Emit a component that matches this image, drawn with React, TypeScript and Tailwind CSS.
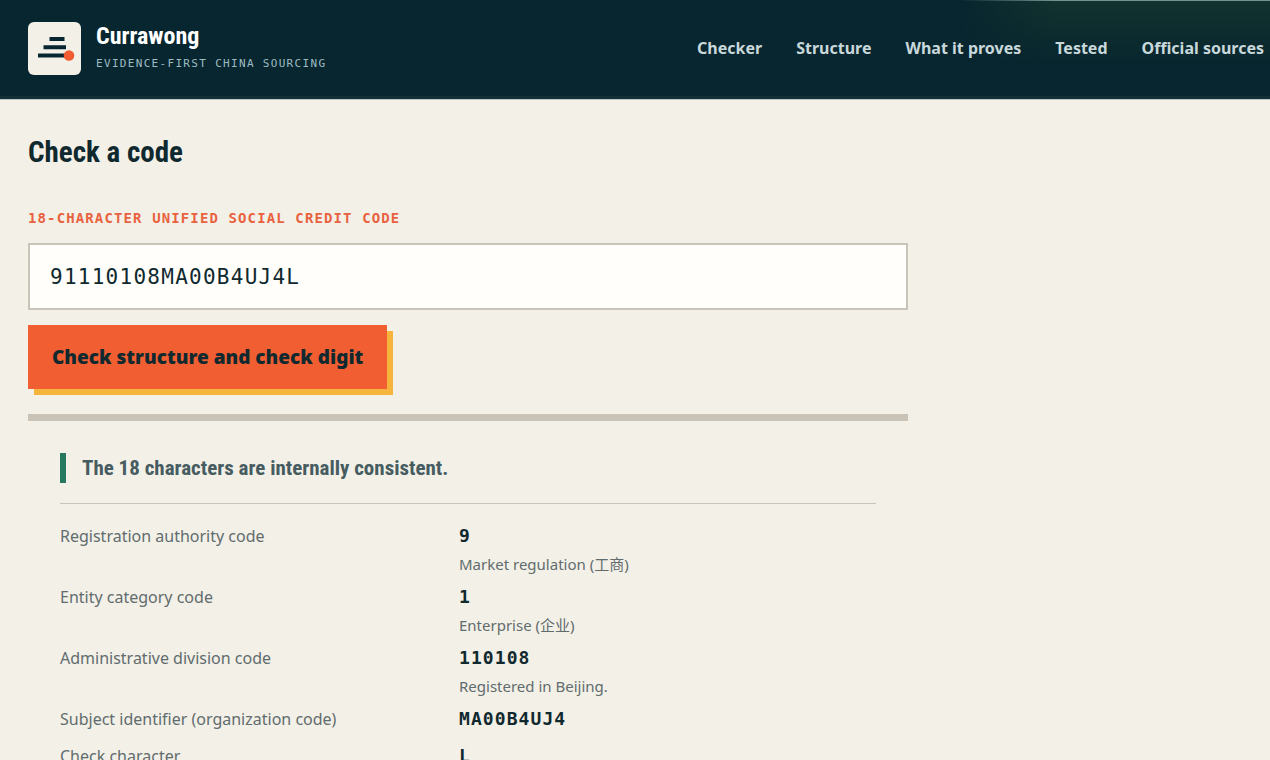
import { useState } from "react";

type NavItem = {
  label: string;
  href: string;
};

type CodePart = {
  label: string;
  value: string;
  note?: string;
};

const navItems: NavItem[] = [
  { label: "Checker", href: "#checker" },
  { label: "Structure", href: "#structure" },
  { label: "What it proves", href: "#proves" },
  { label: "Tested", href: "#tested" },
  { label: "Official sources", href: "#sources" },
];

const parts: CodePart[] = [
  { label: "Registration authority code", value: "9", note: "Market regulation (工商)" },
  { label: "Entity category code", value: "1", note: "Enterprise (企业)" },
  { label: "Administrative division code", value: "110108", note: "Registered in Beijing." },
  { label: "Subject identifier (organization code)", value: "MA00B4UJ4" },
  { label: "Check character", value: "L" },
];

const Logo = () => (
  <svg viewBox="0 0 53 53" className="size-[53px]" aria-hidden="true">
    <rect width="53" height="53" rx="6" fill="#f3f0e8" />
    <path d="M21.5 15h15v4h-15zM15.5 23.3h22.5v4H15.5zM10 31.5h30v4H10z" fill="#08262f" />
    <circle cx="41" cy="33.5" r="5.3" fill="#f25c33" />
  </svg>
);

const Header = () => (
  <header className="relative flex h-[99px] items-center justify-between border-b-[3px] border-[#122e37] bg-[#08262f] pl-7 pr-1.5 font-['Noto_Sans',sans-serif] shadow-[0_1px_0_#b9c3c3]">
    <div className="absolute right-0 top-0 h-16 w-[310px] border-t border-[#6f9292] bg-linear-to-b from-[#12332f] to-transparent mask-[linear-gradient(to_right,transparent,black_30%)]" />
    <a href="#top" className="relative flex items-center gap-[15px]">
      <Logo />
      <span className="flex flex-col gap-1">
        <span className="font-['Roboto_Condensed','Liberation_Sans_Narrow',sans-serif] text-2xl leading-7 font-bold text-white">
          Currawong
        </span>
        <span className="font-['DejaVu_Sans_Mono',monospace] text-[11px] leading-5 tracking-[0.12em] text-[#9dbcc2]">
          EVIDENCE-FIRST CHINA SOURCING
        </span>
      </span>
    </a>
    <nav className="relative flex gap-[34px]">
      {navItems.map((item) => (
        <a key={item.href} href={item.href} className="whitespace-nowrap text-base font-bold text-[#c8d8db]">
          {item.label}
        </a>
      ))}
    </nav>
  </header>
);

export default function App() {
  const [code, setCode] = useState("91110108MA00B4UJ4L");

  return (
    <div id="top" className="min-h-screen bg-[#f3f0e7] font-['Noto_Sans','Noto_Sans_CJK_SC',sans-serif] text-[#10292f]">
      <Header />
      <main className="px-7 pt-[35px]">
        <section id="checker" className="max-w-[880px]">
          <h2 className="font-['Roboto_Condensed','Liberation_Sans_Narrow',sans-serif] text-[29px] leading-9 font-bold">
            Check a code
          </h2>
          <form className="mt-[38px]" onSubmit={(e) => e.preventDefault()}>
            <label
              htmlFor="code"
              className="block font-['DejaVu_Sans_Mono',monospace] text-sm font-bold tracking-[0.08em] text-[#e8623f]"
            >
              18-CHARACTER UNIFIED SOCIAL CREDIT CODE
            </label>
            <input
              id="code"
              value={code}
              onChange={(e) => setCode(e.target.value)}
              maxLength={18}
              spellCheck={false}
              className="mt-[15px] block h-[67px] w-full border-2 border-[#c9c4b8] bg-[#fffefa] px-5 font-['DejaVu_Sans_Mono',monospace] text-[21px] tracking-[0.06em] outline-none"
            />
            <button
              type="submit"
              className="mt-[15px] h-16 bg-[#f15e32] px-6 text-[19px] font-black shadow-[6px_6px_0_#f7b43c]"
            >
              Check structure and check digit
            </button>
          </form>
          <div className="mt-[25px] border-t-[7px] border-[#c9c2b6] px-8 pt-8">
            <h3 className="border-l-[6px] border-[#26795f] pl-4 font-['Roboto_Condensed','Liberation_Sans_Narrow',sans-serif] text-[21px] leading-[30px] font-bold text-[#465c61]">
              The 18 characters are internally consistent.
            </h3>
            <dl className="mt-5 grid gap-y-[5px] border-t border-[#c9c4b8] pt-4 text-[#616c6e]">
              {parts.map((part) => (
                <div key={part.label} className="grid grid-cols-[383px_1fr] gap-x-4">
                  <dt className="text-base leading-8">{part.label}</dt>
                  <dd>
                    <div className="font-['DejaVu_Sans_Mono',monospace] text-lg leading-8 font-bold tracking-[0.06em] text-[#10292f]">
                      {part.value}
                    </div>
                    {part.note && <div className="text-[15px] leading-6">{part.note}</div>}
                  </dd>
                </div>
              ))}
            </dl>
          </div>
        </section>
      </main>
    </div>
  );
}
